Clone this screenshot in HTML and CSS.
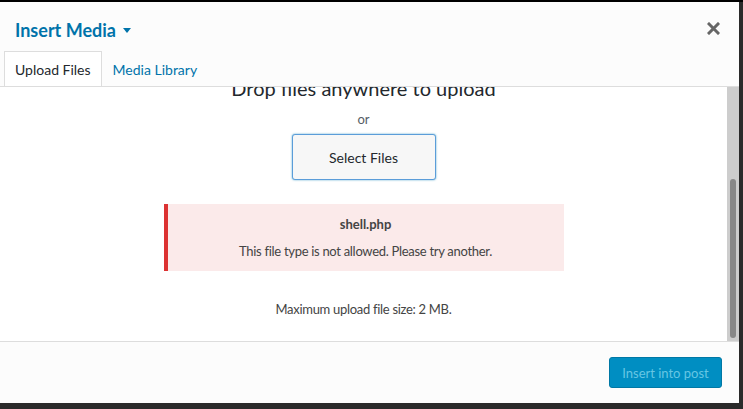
FILE: index.html
```html
<!DOCTYPE html>
<html lang="en">
<head>
<meta charset="utf-8">
<title>Insert Media</title>
<link rel="stylesheet" href="styles.css">
</head>
<body>
<div class="modal">
  <header class="frame-header">
    <div class="title-row">
      <h1 class="frame-title">Insert Media <svg class="caret" width="8" height="5" viewBox="0 0 8 5"><path d="M0 0 H8 L4 5 Z" fill="#0073aa"/></svg></h1>
      <button class="close" aria-label="Close">
        <svg width="13" height="13" viewBox="0 0 13 13"><path d="M2 2 L11 11 M11 2 L2 11" stroke="#666" stroke-width="3" stroke-linecap="square"/></svg>
      </button>
    </div>
    <nav class="tabs">
      <a class="tab active">Upload Files</a>
      <a class="tab">Media Library</a>
    </nav>
  </header>
  <div class="frame-body">
    <main class="frame-content">
      <div class="uploader">
        <h2 class="drop-title">Drop files anywhere to upload</h2>
        <p class="or">or</p>
        <button class="select-files">Select Files</button>
        <div class="upload-error">
          <strong class="error-file">shell.php</strong>
          <p class="error-msg">This file type is not allowed. Please try another.</p>
        </div>
        <p class="max-size">Maximum upload file size: 2 MB.</p>
      </div>
    </main>
    <div class="scrollbar"><div class="thumb"></div></div>
  </div>
  <footer class="frame-footer">
    <button class="insert-btn" disabled>Insert into post</button>
  </footer>
</div>
</body>
</html>
```
FILE: styles.css
```css
* { box-sizing: border-box; }
html, body { margin: 0; padding: 0; }
body {
  width: 743px;
  height: 409px;
  background: #2a2a2a;
  border-top: 2px solid #000;
  overflow: hidden;
  font-family: "Lato", "Noto Sans", sans-serif;
}
.modal {
  width: 739px;
  height: 401px;
  background: #fff;
  display: flex;
  flex-direction: column;
}
.frame-header {
  background: #fcfcfc;
  border-bottom: 1px solid #ddd;
  height: 85px;
}
.title-row {
  height: 49px;
  display: flex;
  align-items: flex-start;
  justify-content: space-between;
  padding: 16px 19px 0 15px;
}
.frame-title {
  margin: 0;
  font-size: 18px;
  line-height: 24px;
  font-weight: 700;
  color: #0073aa;
}
.caret { vertical-align: 4px; margin-left: 3px; }
.close {
  border: 0;
  background: none;
  padding: 0;
  margin-top: 4px;
  width: 13px;
  height: 13px;
  display: block;
}
.close svg { display: block; }
.tabs {
  display: flex;
  padding-left: 4px;
  height: 35px;
}
.tab {
  display: block;
  padding: 0 10px;
  line-height: 35px;
  font-size: 14px;
  color: #0073aa;
  border: 1px solid transparent;
  border-bottom: 0;
}
.tab.active {
  background: #fff;
  border-color: #ddd;
  color: #23282d;
}
.frame-body {
  flex: 1;
  display: flex;
  min-height: 0;
}
.frame-content {
  flex: 1;
  overflow: hidden;
  display: flex;
  flex-direction: column;
  justify-content: flex-end;
}
.scrollbar {
  width: 12px;
  background: #cdcdcd;
  padding: 92px 3px 3px;
}
.thumb {
  height: 159px;
  background: #888;
  border-radius: 3px;
}
.uploader {
  flex-shrink: 0;
  padding: 0 0 23px;
  display: flex;
  flex-direction: column;
  align-items: center;
  text-align: center;
  color: #23282d;
}
.drop-title {
  margin: 0;
  font-size: 20px;
  font-weight: 400;
  line-height: 24px;
}
.or {
  margin: 10px 0 6px;
  font-size: 13px;
  line-height: 18px;
  color: #555d66;
}
.select-files {
  width: 144px;
  height: 46px;
  font-family: inherit;
  font-size: 14px;
  color: #23282d;
  background: #f7f7f7;
  border: 1px solid #5b9dd9;
  border-radius: 3px;
  box-shadow: 0 0 2px rgba(30,140,190,.8);
}
.upload-error {
  margin-top: 24px;
  width: 400px;
  background: #fbeaea;
  border-left: 4px solid #dc3232;
  padding: 10px 12px 10px;
  color: #444;
  font-size: 13px;
}
.error-file {
  display: block;
  font-weight: 700;
  line-height: 20px;
}
.error-msg {
  margin: 7px 0 0;
  line-height: 20px;
  letter-spacing: -0.3px;
}
.max-size {
  margin: 29px 0 0;
  font-size: 13px;
  line-height: 18px;
  color: #444;
  letter-spacing: -0.3px;
}
.frame-footer {
  height: 62px;
  background: #fcfcfc;
  border-top: 1px solid #ddd;
  display: flex;
  justify-content: flex-end;
  padding: 15px 17px 0 0;
}
.insert-btn {
  width: 113px;
  height: 31px;
  font-family: inherit;
  font-size: 13px;
  background: #008ec2;
  color: #66c6e4;
  border: 1px solid #0078a5;
  border-radius: 3px;
}
```
